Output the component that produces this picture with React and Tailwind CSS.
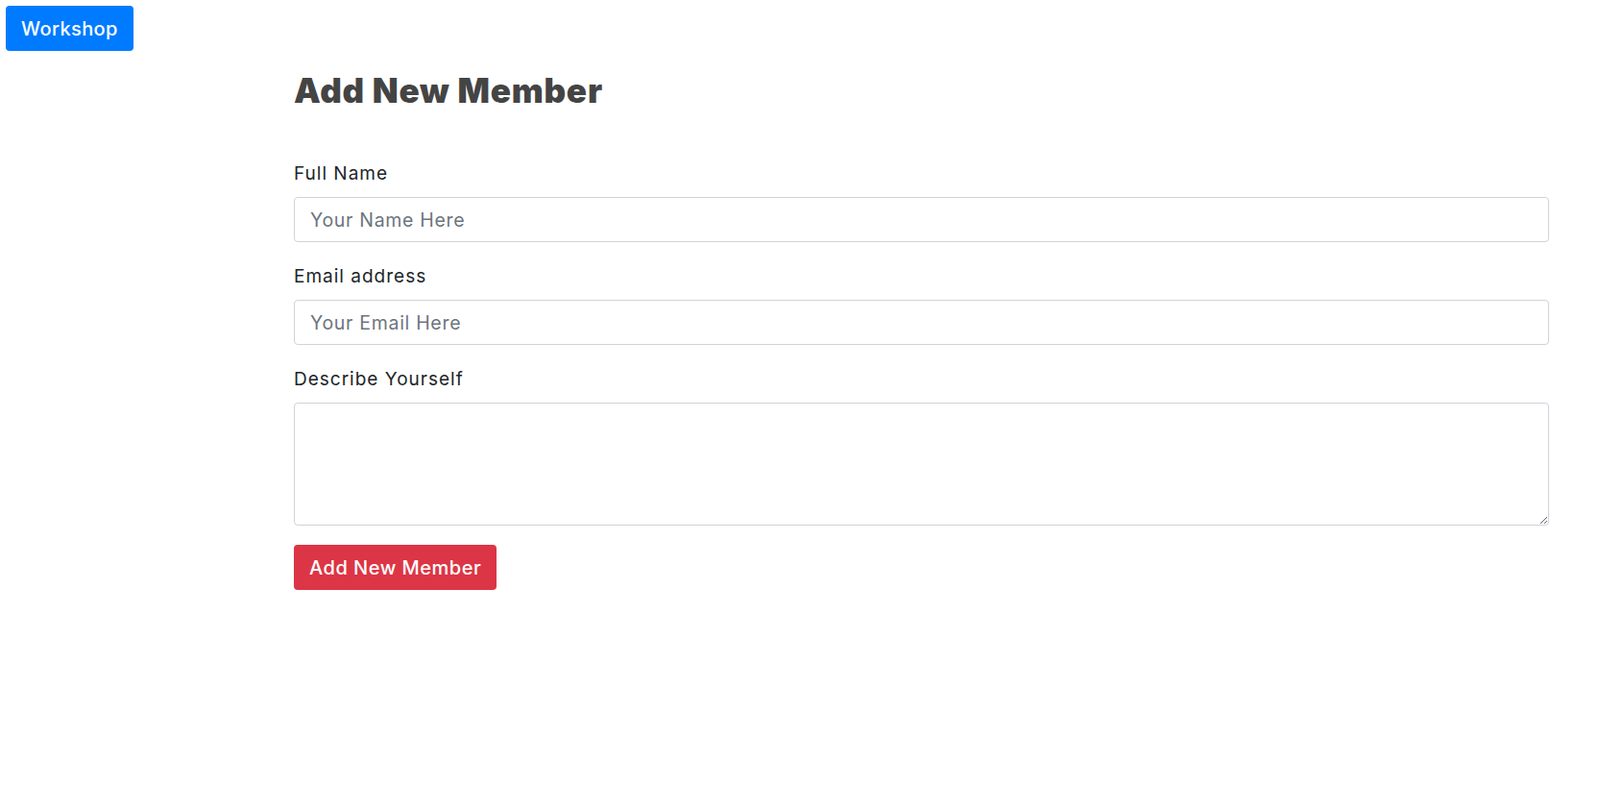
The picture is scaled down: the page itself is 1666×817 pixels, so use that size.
export default function App() {
  return (
    <div className="min-h-[817px] bg-white font-['Inter',sans-serif] text-[#212529]">
      {/* Top-left nav button */}
      <div className="p-[6px]">
        <button className="h-[47px] px-[16px] rounded-[4px] bg-[#007bff] text-white text-[20px] font-medium tracking-[0.4px] leading-none">
          Workshop
        </button>
      </div>

      <div className="ml-[306px] mr-[53px]">
        <h1 className="mt-[14px] text-[35px] leading-[42px] font-black text-[#444444] tracking-[0.8px]">
          Add New Member
        </h1>

        <form className="mt-[52px]" onSubmit={(e) => e.preventDefault()}>
          <div className="mb-[22px]">
            <label className="block text-[19px] leading-[27px] tracking-[1px] mb-[11px]">Full Name</label>
            <input
              type="text"
              placeholder="Your Name Here"
              className="block w-full h-[47px] px-[16px] border border-[#ced4da] rounded-[4px] text-[19.5px] tracking-[0.7px] placeholder:text-[#6c757d] outline-none"
            />
          </div>
          <div className="mb-[22px]">
            <label className="block text-[19px] leading-[27px] tracking-[1px] mb-[11px]">Email address</label>
            <input
              type="email"
              placeholder="Your Email Here"
              className="block w-full h-[47px] px-[16px] border border-[#ced4da] rounded-[4px] text-[19.5px] tracking-[0.7px] placeholder:text-[#6c757d] outline-none"
            />
          </div>
          <div className="mb-[20px]">
            <label className="block text-[19px] leading-[27px] tracking-[1px] mb-[11px]">Describe Yourself</label>
            <textarea className="block w-full h-[128px] px-[16px] py-[8px] border border-[#ced4da] rounded-[4px] text-[19px] outline-none" />
          </div>
          <button className="h-[47px] px-[16px] rounded-[4px] bg-[#dc3545] text-white text-[20px] font-medium tracking-[0.5px] leading-none">
            Add New Member
          </button>
        </form>
      </div>
    </div>
  )
}
